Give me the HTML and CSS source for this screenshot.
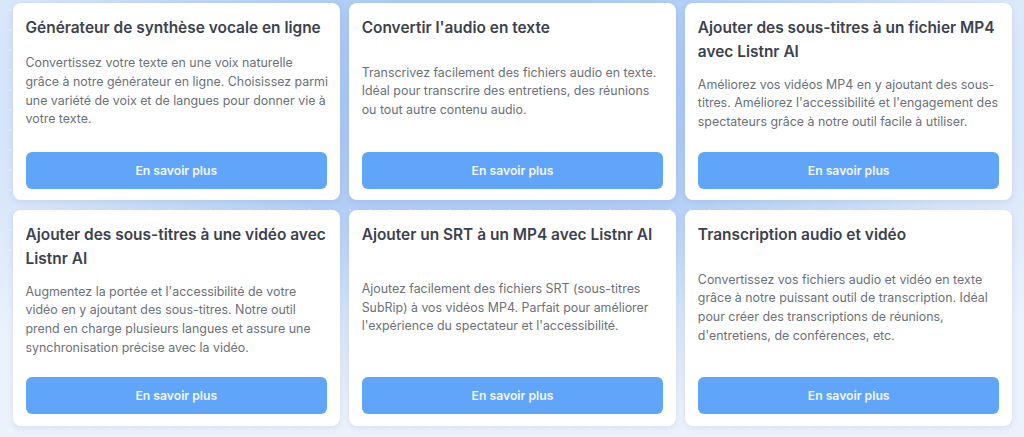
FILE: index.html
```html
<!DOCTYPE html>
<html lang="fr">
<head>
<meta charset="utf-8">
<title>Outils Listnr AI</title>
<link rel="stylesheet" href="styles.css">
</head>
<body>
<main class="page">
  <section class="grid">
    <article class="card">
      <h3 class="title">Générateur de synthèse vocale en ligne</h3>
      <p class="desc">Convertissez votre texte en une voix naturelle grâce à notre générateur en ligne. Choisissez parmi une variété de voix et de langues pour donner vie à votre texte.</p>
      <a class="btn" href="#">En savoir plus</a>
    </article>
    <article class="card">
      <h3 class="title">Convertir l'audio en texte</h3>
      <p class="desc">Transcrivez facilement des fichiers audio en texte. Idéal pour transcrire des entretiens, des réunions ou tout autre contenu audio.</p>
      <a class="btn" href="#">En savoir plus</a>
    </article>
    <article class="card">
      <h3 class="title">Ajouter des sous-titres à un fichier MP4 avec Listnr AI</h3>
      <p class="desc">Améliorez vos vidéos MP4 en y ajoutant des sous-titres. Améliorez l'accessibilité et l'engagement des spectateurs grâce à notre outil facile à utiliser.</p>
      <a class="btn" href="#">En savoir plus</a>
    </article>
    <article class="card">
      <h3 class="title">Ajouter des sous-titres à une vidéo avec Listnr AI</h3>
      <p class="desc">Augmentez la portée et l'accessibilité de votre vidéo en y ajoutant des sous-titres. Notre outil prend en charge plusieurs langues et assure une synchronisation précise avec la vidéo.</p>
      <a class="btn" href="#">En savoir plus</a>
    </article>
    <article class="card">
      <h3 class="title">Ajouter un SRT à un MP4 avec Listnr AI</h3>
      <p class="desc">Ajoutez facilement des fichiers SRT (sous-titres SubRip) à vos vidéos MP4. Parfait pour améliorer l'expérience du spectateur et l'accessibilité.</p>
      <a class="btn" href="#">En savoir plus</a>
    </article>
    <article class="card">
      <h3 class="title">Transcription audio et vidéo</h3>
      <p class="desc">Convertissez vos fichiers audio et vidéo en texte grâce à notre puissant outil de transcription. Idéal pour créer des transcriptions de réunions, d'entretiens, de conférences, etc.</p>
      <a class="btn" href="#">En savoir plus</a>
    </article>
  </section>
</main>
</body>
</html>
```

FILE: styles.css
```css
* { box-sizing: border-box; }

html, body {
  margin: 0;
  padding: 0;
  height: 100%;
}

body {
  font-family: Inter, "Noto Sans", "Liberation Sans", sans-serif;
  background-color: #dce8fa;
  background-image:
    radial-gradient(circle, rgba(255,255,255,0.35) 1px, transparent 1.6px),
    radial-gradient(ellipse 70% 75% at 48% 22%, #9fc1f3 0%, #b3cff6 40%, #d6e5fa 70%, #ecf2fc 100%);
  background-size: 20px 20px, 100% 100%;
  overflow: hidden;
}

.page {
  padding: 3px 12px 0 13px;
}

.grid {
  display: grid;
  grid-template-columns: repeat(3, 1fr);
  column-gap: 9.5px;
  row-gap: 10px;
}

.card {
  background: #ffffff;
  border-radius: 8px;
  padding: 12.5px 12.5px 11.5px;
  display: flex;
  flex-direction: column;
  justify-content: space-between;
  box-shadow: 0 2px 6px rgba(60, 90, 140, 0.12);
}

.title {
  margin: 0 0 12px;
  font-size: 15.45px;
  line-height: 24px;
  font-weight: 600;
  color: #3c424d;
}

.desc {
  margin: 0 -1.6px 20px 0;
  font-size: 12.4px;
  line-height: 18.67px;
  font-weight: 400;
  color: #6b7079;
}

.btn {
  display: flex;
  align-items: center;
  justify-content: center;
  height: 37px;
  border-radius: 6px;
  background: #60a5fa;
  color: #f4f8ff;
  font-size: 12.2px;
  font-weight: 600;
  text-decoration: none;
}
```
